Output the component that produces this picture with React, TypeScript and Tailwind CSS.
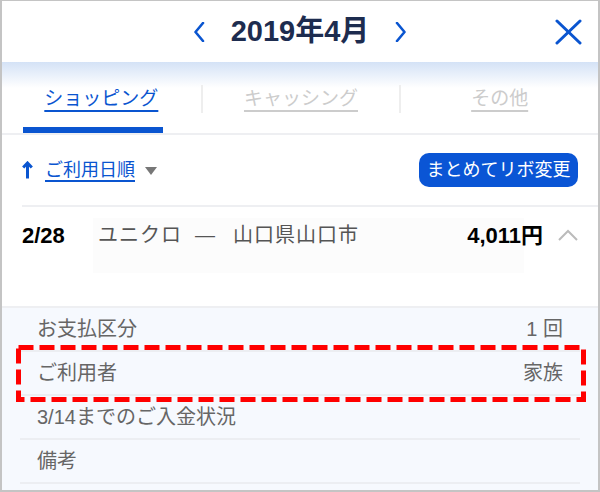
import React from "react";

const FONT = { fontFamily: '"Liberation Sans", "Noto Sans CJK JP", sans-serif' };

function DetailRow({ label, value, boxed }: { label: string; value?: string; boxed?: boolean }) {
  return (
    <div className="relative mx-[18px] h-[44px] border-b-2 border-[#eceef2] flex items-center justify-between px-[17px] text-[20px] text-[#666666]">
      <span>{label}</span>
      {value ? <span>{value}</span> : null}
      {boxed ? (
        <svg className="absolute left-[-4px] top-[-7px]" width="570" height="57" viewBox="0 0 570 57">
          <rect x="2.5" y="2.5" width="565" height="52" fill="none" stroke="#ff0000" strokeWidth="5" strokeDasharray="15 6" />
        </svg>
      ) : null}
    </div>
  );
}

export default function App() {
  return (
    <div className="w-[600px] h-[492px] overflow-hidden bg-white border-2 border-t border-[#c4c4c4] flex flex-col" style={FONT}>
      {/* Header */}
      <div className="h-[61px] shrink-0 grid grid-cols-[1fr_auto_1fr] items-center">
        <div />
        <div className="flex items-center gap-[26px]">
          <svg width="12" height="20" viewBox="0 0 12 20">
            <polyline points="10,1 2.5,10 10,19" fill="none" stroke="#0a55d0" strokeWidth="2.6" strokeLinecap="round" strokeLinejoin="round" />
          </svg>
          <span className="text-[29px] font-bold text-[#1d2c4f] leading-none">2019年4月</span>
          <svg width="12" height="20" viewBox="0 0 12 20">
            <polyline points="2,1 9.5,10 2,19" fill="none" stroke="#0a55d0" strokeWidth="2.6" strokeLinecap="round" strokeLinejoin="round" />
          </svg>
        </div>
        <div className="flex justify-end pr-[16px]">
          <svg width="27" height="26" viewBox="0 0 27 26">
            <line x1="2" y1="2" x2="25" y2="24" stroke="#0a55d0" strokeWidth="3" strokeLinecap="round" />
            <line x1="25" y1="2" x2="2" y2="24" stroke="#0a55d0" strokeWidth="3" strokeLinecap="round" />
          </svg>
        </div>
      </div>

      {/* Tabs */}
      <div className="h-[71px] shrink-0 bg-[linear-gradient(to_bottom,#d4e2f6_0px,#ffffff_26px)] flex flex-col">
        <div className="grid grid-cols-3 pt-[23px]">
          <div className="h-[28px] flex items-center justify-center">
            <span className="text-[19px] text-[#0a55d0] underline underline-offset-[5px] decoration-[1.5px]">ショッピング</span>
          </div>
          <div className="h-[28px] flex items-center justify-center border-l-2 border-[#eeeeee]">
            <span className="text-[19px] text-[#cccccc] underline underline-offset-[5px] decoration-[1.5px]">キャッシング</span>
          </div>
          <div className="h-[28px] flex items-center justify-center border-l-2 border-[#eeeeee]">
            <span className="text-[19px] text-[#cccccc] underline underline-offset-[5px] decoration-[1.5px]">その他</span>
          </div>
        </div>
        <div className="mt-[14px] ml-[21px] w-[140px] h-[6px] bg-[#0a55d0]" />
      </div>
      <div className="h-[2px] shrink-0 bg-[#eeeff2]" />

      {/* Sort row */}
      <div className="h-[70px] shrink-0 flex items-center pl-[20px] pr-[20px]">
        <svg width="11" height="18" viewBox="0 0 11 18">
          <line x1="5.5" y1="2.5" x2="5.5" y2="17.5" stroke="#0a55d0" strokeWidth="3" />
          <polyline points="1.2,6.5 5.5,2 9.8,6.5" fill="none" stroke="#0a55d0" strokeWidth="3" strokeLinejoin="miter" />
        </svg>
        <span className="ml-[12px] text-[18px] text-[#0a55d0] underline underline-offset-[4px] decoration-[1.5px]">ご利用日順</span>
        <svg className="ml-[10px] mt-[2px]" width="12" height="8" viewBox="0 0 12 8">
          <polygon points="0,0 12,0 6,8" fill="#777777" />
        </svg>
        <div className="ml-auto h-[34px] w-[159px] rounded-[10px] bg-[#0a55d5] flex items-center justify-center text-[18px] text-white">
          まとめてリボ変更
        </div>
      </div>
      <div className="h-[2px] shrink-0 ml-[20px] bg-[#eeeff2]" />

      {/* Transaction row */}
      <div className="relative h-[99px] shrink-0">
        <div className="absolute left-[91px] top-[11px] w-[431px] h-[55px] bg-[#fcfcfc]" />
        <div className="relative flex items-center h-[56px] pl-[20px] pr-[20px]">
          <span className="w-[76px] text-[22px] font-bold text-black">2/28</span>
          <div className="flex-1 flex items-center text-[20px] text-[#555555] tracking-[1px]">
            <span>ユニクロ</span>
            <span className="ml-[13px]">—</span>
            <span className="ml-[17px]">山口県山口市</span>
          </div>
          <span className="text-[22px] font-bold text-black">4,011円</span>
          <svg className="ml-[15px]" width="20" height="12" viewBox="0 0 20 12">
            <polyline points="1,11 10,2 19,11" fill="none" stroke="#bbbbbb" strokeWidth="2" />
          </svg>
        </div>
      </div>
      <div className="h-[2px] shrink-0 bg-[#eeeff2]" />

      {/* Details */}
      <div className="flex-1 bg-[#f6f9fe]">
        <DetailRow label="お支払区分" value="1 回" />
        <DetailRow label="ご利用者" value="家族" boxed />
        <DetailRow label="3/14までのご入金状況" />
        <DetailRow label="備考" />
      </div>
    </div>
  );
}
